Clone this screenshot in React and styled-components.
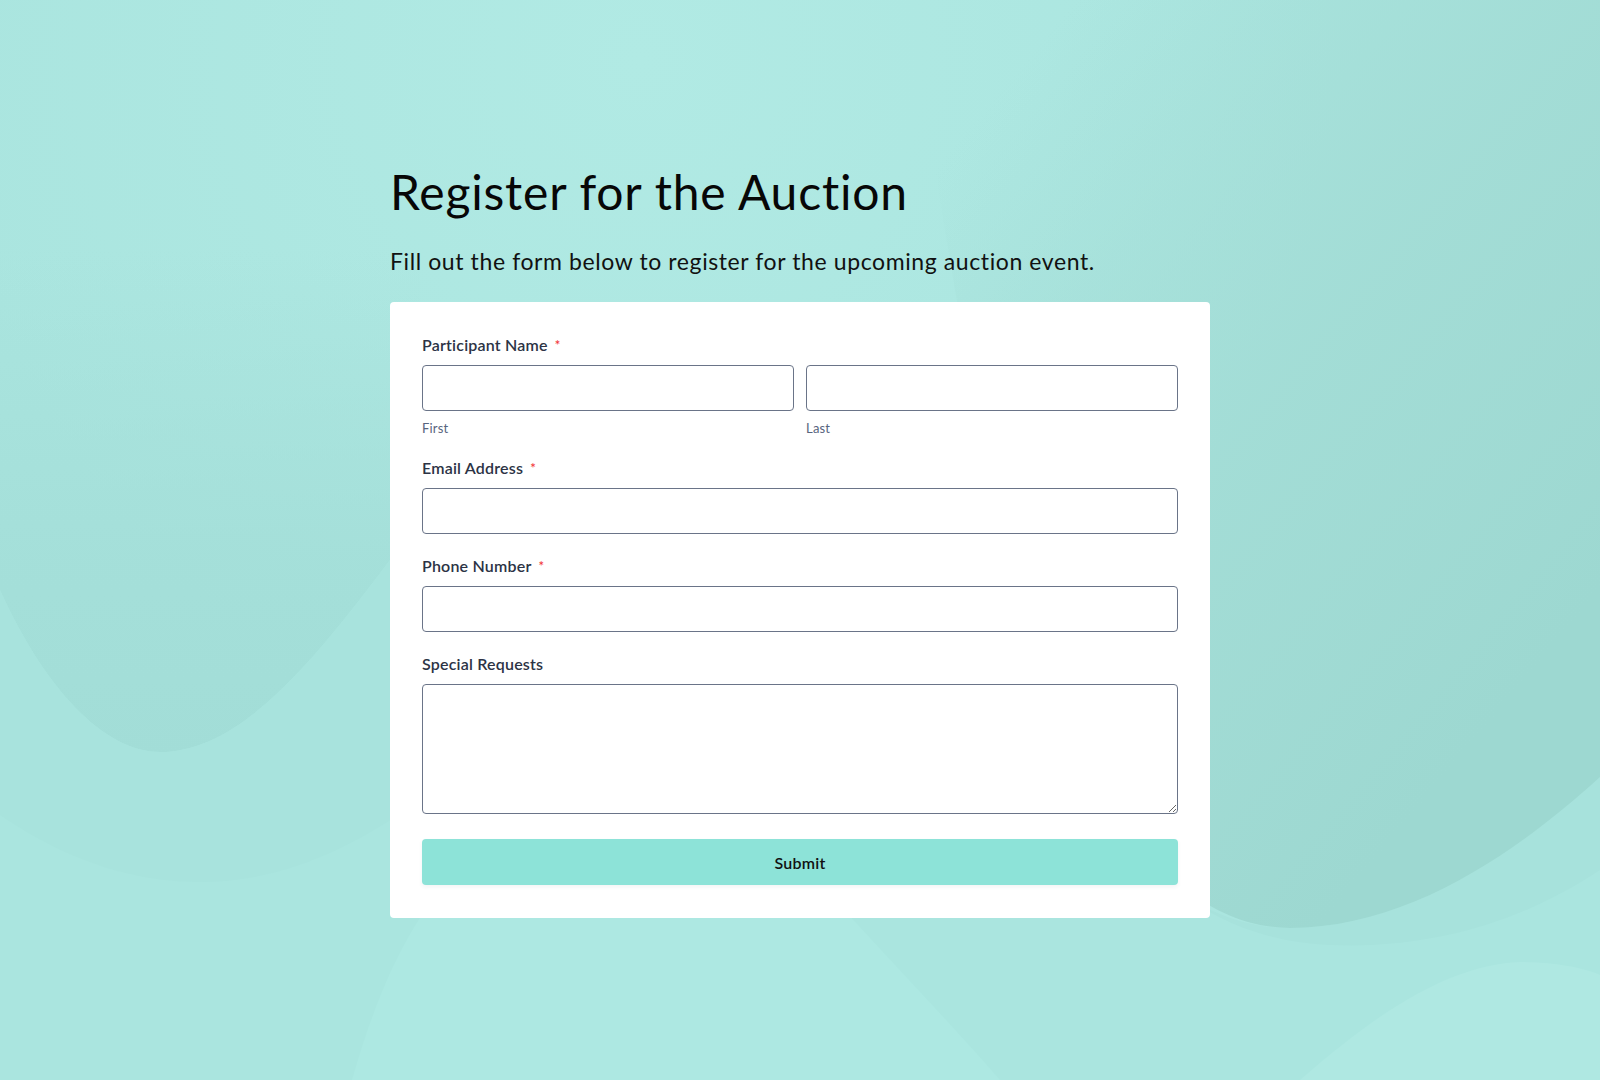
import React from "react";
import styled, { createGlobalStyle } from "styled-components";

const GlobalStyle = createGlobalStyle`
   * {
      box-sizing: border-box;
   }
   html, body {
      margin: 0;
      padding: 0;
   }
   body {
      font-family: Lato, "Noto Sans", "Liberation Sans", sans-serif;
      background: #aae5df;
   }
`;

const Backdrop = () => (
   <BackdropSvg viewBox="0 0 1600 1080" preserveAspectRatio="none">
      <defs>
         <radialGradient id="glow" cx="640" cy="60" r="700" gradientUnits="userSpaceOnUse">
            <stop offset="0" stopColor="#b1eae4" />
            <stop offset="1" stopColor="#b1eae4" stopOpacity="0" />
         </radialGradient>
         <linearGradient id="rightShade" x1="950" y1="150" x2="1550" y2="650" gradientUnits="userSpaceOnUse">
            <stop offset="0" stopColor="#9fd9d2" stopOpacity="0" />
            <stop offset="0.55" stopColor="#a1dbd4" stopOpacity="0.85" />
            <stop offset="1" stopColor="#9dd8d1" />
         </linearGradient>
         <linearGradient id="leftShade" x1="0" y1="250" x2="0" y2="760" gradientUnits="userSpaceOnUse">
            <stop offset="0" stopColor="#a3ded8" stopOpacity="0" />
            <stop offset="0.6" stopColor="#a3ded8" stopOpacity="0.8" />
            <stop offset="1" stopColor="#a2ddd7" />
         </linearGradient>
      </defs>
      <rect x="0" y="0" width="1600" height="1080" fill="#aae5df" />
      <rect x="0" y="0" width="1600" height="1080" fill="url(#glow)" />
      <path
         d="M1040 700 C1120 880 1220 940 1330 945 C1450 950 1540 910 1600 870 L1600 777 C1520 850 1410 928 1290 928 C1200 928 1120 860 1060 760 Z"
         fill="#a7e2dc"
      />
      <path
         d="M900 -40 C960 300 990 600 1100 790 C1160 890 1230 928 1290 928 C1410 928 1520 850 1600 777 L1600 -40 Z"
         fill="url(#rightShade)"
      />
      <path
         d="M0 250 L0 590 C50 700 110 752 160 752 C250 752 330 640 420 520 L420 250 Z"
         fill="url(#leftShade)"
      />
      <path
         d="M0 590 L0 815 C80 870 150 882 200 882 C280 882 350 850 420 800 L420 520 C330 640 250 752 160 752 C110 752 50 700 0 590 Z"
         fill="#a8e3dd"
      />
      <path
         d="M352 1080 C380 980 420 900 470 860 L800 860 C860 930 930 1000 1000 1080 Z"
         fill="#ade8e2"
      />
      <path
         d="M1300 1080 C1380 1010 1450 965 1520 962 C1560 962 1590 970 1600 975 L1600 1080 Z"
         fill="#afe8e2"
      />
   </BackdropSvg>
);

const Field = ({ label, required, children }) => (
   <FieldWrap>
      <Label>
         {label}
         {required && <Star>*</Star>}
      </Label>
      {children}
   </FieldWrap>
);

const App = () => {
   return (
      <Page>
         <GlobalStyle />
         <Backdrop />
         <Content>
            <Title>Register for the Auction</Title>
            <Subtitle>
               Fill out the form below to register for the upcoming auction event.
            </Subtitle>

            <Card onSubmit={(e) => e.preventDefault()}>
               <Field label="Participant Name" required>
                  <NameRow>
                     <div>
                        <Input type="text" />
                        <Hint>First</Hint>
                     </div>
                     <div>
                        <Input type="text" />
                        <Hint>Last</Hint>
                     </div>
                  </NameRow>
               </Field>

               <Field label="Email Address" required>
                  <Input type="email" />
               </Field>

               <Field label="Phone Number" required>
                  <Input type="tel" />
               </Field>

               <Field label="Special Requests">
                  <TextArea />
               </Field>

               <SubmitButton type="submit">Submit</SubmitButton>
            </Card>
         </Content>
      </Page>
   );
};

const Page = styled.div`
   position: relative;
   min-height: 100vh;
   overflow: hidden;
`;

const BackdropSvg = styled.svg`
   position: absolute;
   inset: 0;
   width: 100%;
   height: 100%;
   z-index: 0;
`;

const Content = styled.main`
   position: relative;
   z-index: 1;
   width: 820px;
   margin: 0 auto;
   padding: 163px 0 80px;
   font-variant-ligatures: no-common-ligatures;
`;

const Title = styled.h1`
   margin: 0;
   font-size: 48px;
   line-height: 1.2;
   font-weight: 400;
   letter-spacing: 0.8px;
   color: #070707;
`;

const Subtitle = styled.p`
   margin: 27px 0 27px;
   font-size: 23px;
   line-height: 1.2;
   font-weight: 400;
   letter-spacing: 0.6px;
   color: #111;
`;

const Card = styled.form`
   background: #fff;
   border-radius: 4px;
   padding: 33px 32px 33px;
   display: flex;
   flex-direction: column;
   gap: 22px;
`;

const FieldWrap = styled.div`
   display: flex;
   flex-direction: column;
`;

const Label = styled.label`
   font-size: 16px;
   line-height: 20px;
   font-weight: 600;
   letter-spacing: 0.2px;
   color: #2c3345;
   margin-bottom: 10px;
`;

const Star = styled.span`
   color: #f23a3c;
   font-size: 13px;
   margin-left: 7px;
   vertical-align: top;
`;

const NameRow = styled.div`
   display: grid;
   grid-template-columns: 1fr 1fr;
   gap: 12px;
`;

const Input = styled.input`
   display: block;
   width: 100%;
   height: 46px;
   border: 1px solid #6a7488;
   border-radius: 4px;
   padding: 0 12px;
   font-family: inherit;
   font-size: 15px;
   background: #fff;
   outline: none;
`;

const Hint = styled.div`
   margin-top: 9px;
   font-size: 13px;
   line-height: 16px;
   letter-spacing: 0.2px;
   color: #57647e;
`;

const TextArea = styled.textarea`
   display: block;
   width: 100%;
   height: 130px;
   border: 1px solid #6a7488;
   border-radius: 4px;
   padding: 10px 12px;
   font-family: inherit;
   font-size: 15px;
   resize: vertical;
   outline: none;
`;

const SubmitButton = styled.button`
   margin-top: 3px;
   height: 46px;
   width: 100%;
   border: none;
   border-radius: 4px;
   background: #8de3d8;
   box-shadow: 0 2px 4px rgba(40, 60, 80, 0.06);
   font-family: inherit;
   font-size: 16px;
   font-weight: 600;
   letter-spacing: 0.2px;
   color: #111;
   cursor: pointer;
`;

export default App;
